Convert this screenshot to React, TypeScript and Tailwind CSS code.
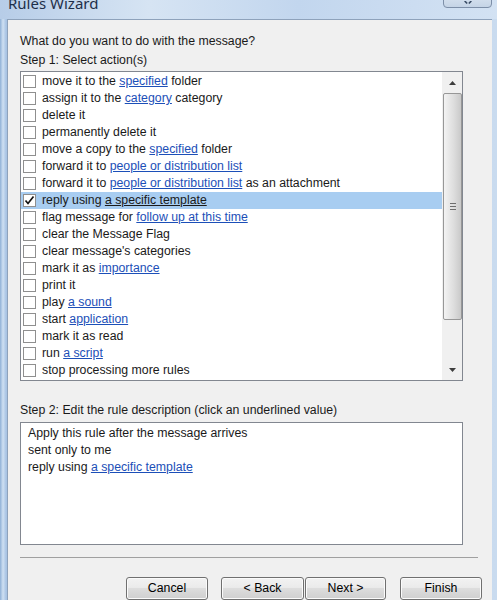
import React from 'react'

type Part = string | { link: string }

const actions: Part[][] = [
  ['move it to the ', { link: 'specified' }, ' folder'],
  ['assign it to the ', { link: 'category' }, ' category'],
  ['delete it'],
  ['permanently delete it'],
  ['move a copy to the ', { link: 'specified' }, ' folder'],
  ['forward it to ', { link: 'people or distribution list' }],
  ['forward it to ', { link: 'people or distribution list' }, ' as an attachment'],
  ['reply using ', { link: 'a specific template' }],
  ['flag message for ', { link: 'follow up at this time' }],
  ['clear the Message Flag'],
  ["clear message's categories"],
  ['mark it as ', { link: 'importance' }],
  ['print it'],
  ['play ', { link: 'a sound' }],
  ['start ', { link: 'application' }],
  ['mark it as read'],
  ['run ', { link: 'a script' }],
  ['stop processing more rules'],
]

const SELECTED = 7

function Text({ parts, selected }: { parts: Part[]; selected?: boolean }) {
  return (
    <span className="whitespace-nowrap">
      {parts.map((p, i) =>
        typeof p === 'string' ? (
          <span key={i}>{p}</span>
        ) : (
          <span key={i} className={selected ? 'underline' : 'text-[#1c4fb8] underline'}>
            {p.link}
          </span>
        ),
      )}
    </span>
  )
}

function Checkbox({ checked }: { checked?: boolean }) {
  return (
    <div className="flex size-[13px] shrink-0 items-center justify-center border border-[#8f8f8f] bg-[linear-gradient(135deg,#dcdcdc,#fbfbfb)]">
      <div className="flex size-[11px] items-center justify-center bg-white">
        {checked && (
          <svg viewBox="0 0 11 11" className="size-[11px]">
            <path d="M1.5 5.5 L4 8.5 L9.5 1.5" fill="none" stroke="#111" strokeWidth="1.7" />
          </svg>
        )}
      </div>
    </div>
  )
}

function Button({ label }: { label: string }) {
  return (
    <div className="flex h-[23px] items-center justify-center rounded-[3px] border border-[#707070] bg-[linear-gradient(#f2f2f2_0%,#ebebeb_45%,#dddddd_50%,#cfcfcf_100%)] text-[12.3px] text-black shadow-[inset_0_0_0_1px_#fbfbfb]">
      {label}
    </div>
  )
}

export default function App() {
  return (
    <div
      className="flex h-[600px] w-[497px] flex-col overflow-hidden bg-[linear-gradient(90deg,#8fb0d6_0px,#cfe0f2_3px,#a9c4e4_6px,#bcd2ec_50%,#c9dbef_100%)] text-[12.3px] text-[#1a1a1a]"
      style={{ fontFamily: '"Liberation Sans", Arial, sans-serif' }}
    >
      {/* title bar */}
      <div className="relative flex h-[19px] shrink-0 items-start overflow-hidden bg-[linear-gradient(90deg,#b7cde8,#d6e4f3_30%,#c2d6ee_60%,#d3e2f3)]">
        <div className="ml-[8px] mt-[-6px] text-[15px] leading-[18px] text-[#1e2f4a]" style={{ fontFamily: '"Noto Sans", sans-serif' }}>
          Rules Wizard
        </div>
        <div className="absolute right-[5px] top-[-6px] flex h-[14px] w-[49px] items-end justify-center rounded-b-[4px] border border-[#7d8fa8] bg-[linear-gradient(#d9e4f0,#c5d4e6)] pb-[1px]">
          <svg viewBox="0 0 12 6" className="h-[5px] w-[12px]">
            <path d="M2 0 L5 3 M10 0 L7 3" stroke="#3a4d66" strokeWidth="2" fill="none" />
          </svg>
        </div>
      </div>

      <div className="flex flex-1">
        <div className="w-[7px] shrink-0" />
        {/* client area */}
        <div className="flex w-[485px] shrink-0 flex-col border-l border-t border-[#8ea2bb] bg-[#f0f0f0] pl-[12px] pt-[13px]">
          <div className="h-[17px] leading-[17px]">What do you want to do with the message?</div>
          <div className="mt-[2px] h-[17px] leading-[17px]">Step 1: Select action(s)</div>

          {/* action list */}
          <div className="mt-[2px] flex h-[310px] w-[443px] border border-[#828790] bg-white">
            <div className="flex w-[421px] flex-col pt-[1px]">
              {actions.map((parts, i) => (
                <div
                  key={i}
                  className={`flex h-[17px] items-center gap-[6px] pl-[2px] ${i === SELECTED ? 'bg-[#a8cdf1]' : ''}`}
                >
                  <Checkbox checked={i === SELECTED} />
                  <Text parts={parts} selected={i === SELECTED} />
                </div>
              ))}
            </div>
            {/* scrollbar */}
            <div className="flex w-[20px] flex-col bg-[#f0f0f0] pl-[1px]">
              <div className="flex h-[21px] items-center justify-center">
                <svg viewBox="0 0 7 4" className="h-[4px] w-[7px]">
                  <path d="M0 4 L3.5 0 L7 4Z" fill="#3d3d3d" />
                </svg>
              </div>
              <div className="flex h-[227px] items-center justify-center rounded-[2px] border border-[#979797] bg-[linear-gradient(90deg,#f3f3f3,#dcdcdc_60%,#c9c9c9)]">
                <div className="flex flex-col gap-[2px] pl-[1px]">
                  <div className="h-px w-[6px] bg-[#6d6d6d]" />
                  <div className="h-px w-[6px] bg-[#6d6d6d]" />
                  <div className="h-px w-[6px] bg-[#6d6d6d]" />
                </div>
              </div>
              <div className="flex-1" />
              <div className="flex h-[21px] items-center justify-center">
                <svg viewBox="0 0 7 4" className="h-[4px] w-[7px]">
                  <path d="M0 0 L3.5 4 L7 0Z" fill="#3d3d3d" />
                </svg>
              </div>
            </div>
          </div>

          <div className="mt-[21px] h-[17px] leading-[17px]">Step 2: Edit the rule description (click an underlined value)</div>

          {/* description */}
          <div className="mt-[3px] flex h-[123px] w-[443px] flex-col border border-[#828790] bg-white pl-[7px] pt-[2px]">
            <div className="h-[17px] leading-[17px]">Apply this rule after the message arrives</div>
            <div className="h-[17px] leading-[17px]">sent only to me</div>
            <div className="h-[17px] leading-[17px]">
              <Text parts={['reply using ', { link: 'a specific template' }]} />
            </div>
          </div>

          <div className="mt-[12px] h-[2px] w-[458px] border-t border-[#a0a0a0] border-b-white" />

          <div className="mt-[18px] flex pl-[106px]">
            <div className="w-[82px]"><Button label="Cancel" /></div>
            <div className="ml-[13px] w-[83px]"><Button label="< Back" /></div>
            <div className="ml-[1px] w-[81px]"><Button label="Next >" /></div>
            <div className="ml-[14px] w-[82px]"><Button label="Finish" /></div>
          </div>
        </div>
      </div>
    </div>
  )
}
